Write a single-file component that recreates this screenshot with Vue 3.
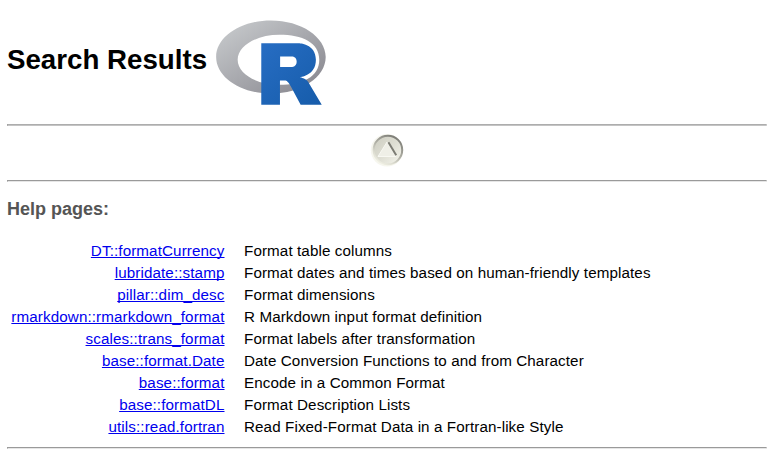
<script setup>
const pages = [
  { name: 'DT::formatCurrency', title: 'Format table columns' },
  { name: 'lubridate::stamp', title: 'Format dates and times based on human-friendly templates' },
  { name: 'pillar::dim_desc', title: 'Format dimensions' },
  { name: 'rmarkdown::rmarkdown_format', title: 'R Markdown input format definition' },
  { name: 'scales::trans_format', title: 'Format labels after transformation' },
  { name: 'base::format.Date', title: 'Date Conversion Functions to and from Character' },
  { name: 'base::format', title: 'Encode in a Common Format' },
  { name: 'base::formatDL', title: 'Format Description Lists' },
  { name: 'utils::read.fortran', title: 'Read Fixed-Format Data in a Fortran-like Style' },
]
</script>

<template>
  <main class="page">
    <header class="head">
      <h1>Search Results</h1>
      <svg class="logo" viewBox="0 0 724 561" preserveAspectRatio="none">
        <defs>
          <linearGradient id="ring" x1="0" y1="0" x2="1" y2="1">
            <stop offset="0" stop-color="#cbced0" />
            <stop offset="1" stop-color="#84838b" />
          </linearGradient>
          <linearGradient id="mark" x1="0" y1="0" x2="1" y2="1">
            <stop offset="0" stop-color="#276dc3" />
            <stop offset="1" stop-color="#165caa" />
          </linearGradient>
        </defs>
        <path fill="url(#ring)" fill-rule="evenodd" d="M361.453,485.937C162.329,485.937 .906,377.828 .906,244.469C.906,111.109 162.329,3 361.453,3C560.578,3 722,111.109 722,244.469C722,377.828 560.578,485.937 361.453,485.937ZM416.641,97.406C265.289,97.406 142.594,171.314 142.594,262.484C142.594,353.654 265.289,427.562 416.641,427.562C567.992,427.562 679.687,377.033 679.687,262.484C679.687,147.971 567.992,97.406 416.641,97.406Z" />
        <path fill="url(#mark)" fill-rule="evenodd" d="M550,377C550,377 571.822,383.585 584.5,390C588.899,392.226 596.51,396.668 602,402.5C607.378,408.212 610,414 610,414L696,559L557,559.062L492,437C492,437 478.69,414.131 470.5,407.5C463.668,401.969 460.755,400 454,400L420.974,400L421,558.974L298,559.026L298,152.938L545,152.938C545,152.938 657.5,154.967 657.5,262C657.5,369.033 550,377 550,377ZM496.5,241.024L422.037,240.976L422,310.026L496.5,310.002C496.5,310.002 531,309.895 531,274.877C531,239.155 496.5,241.024 496.5,241.024Z" />
      </svg>
    </header>
    <div class="rule soft"></div>
    <nav class="up">
      <svg width="34" height="34" viewBox="0 0 34 34">
        <defs>
          <linearGradient id="rim" x1="0.8" y1="0.05" x2="0.25" y2="0.95">
            <stop offset="0" stop-color="#7c7c76" />
            <stop offset="0.5" stop-color="#aeaea4" />
            <stop offset="0.8" stop-color="#dcdcd0" />
            <stop offset="1" stop-color="#eeeee2" />
          </linearGradient>
          <linearGradient id="face" x1="0.1" y1="0.1" x2="0.9" y2="0.9">
            <stop offset="0" stop-color="#cfcfc3" />
            <stop offset="0.5" stop-color="#deded3" />
            <stop offset="1" stop-color="#f1f1e8" />
          </linearGradient>
        </defs>
        <circle cx="17" cy="17.2" r="16.2" fill="#f6f6ee" />
        <circle cx="17.9" cy="17" r="14.3" fill="url(#face)" stroke="url(#rim)" stroke-width="2" />
        <path d="M8 23.5L17 9L26 23.5Z" fill="#efefe7" stroke="#f8f8f2" stroke-width="1" />
        <path d="M18.4 9.3L26.2 22.2" fill="none" stroke="#7c7c74" stroke-width="2" />
      </svg>
    </nav>
    <div class="rule"></div>
    <h3>Help pages:</h3>
    <div class="results">
      <div v-for="p in pages" :key="p.name" class="row">
        <div class="name"><a href="#">{{ p.name }}</a></div>
        <div class="title"><span>{{ p.title }}</span></div>
      </div>
    </div>
    <div class="rule last"></div>
  </main>
</template>

<style>
body {
  background: #fff;
  overflow: hidden;
}
</style>

<style scoped>
.page {
  box-sizing: border-box;
  width: 775px;
  height: 449px;
  padding: 0 8px 0 7px;
  overflow: hidden;
  background: #fff;
  color: #000;
  font-family: Arial, "Liberation Sans", sans-serif;
  font-size: 15.2px;
}
.head {
  display: flex;
  height: 124px;
  align-items: flex-start;
}
h1 {
  width: 209px;
  margin: 44px 0 0;
  font-size: 27.7px;
  line-height: 31px;
  white-space: nowrap;
}
.logo {
  width: 110px;
  height: 85px;
  margin-top: 20px;
}
.rule {
  box-sizing: border-box;
  width: 760px;
  height: 2px;
  border: 1px solid;
  border-color: #9a9a9a #e6e6e6 #e6e6e6 #9a9a9a;
}
.rule.soft {
  border-color: #adadad #dedede #c4c4c4 #9a9a9a;
}
.up {
  display: flex;
  height: 54px;
  padding-top: 7px;
  box-sizing: border-box;
  justify-content: center;
}
h3 {
  height: 58px;
  margin: 0;
  padding-top: 16px;
  box-sizing: border-box;
  color: #555;
  font-size: 18px;
  line-height: 22px;
}
.results {
  display: grid;
  height: 207px;
  grid-auto-rows: 21.95px;
}
.row {
  display: grid;
  grid-template-columns: 217.5px 1fr;
  column-gap: 19.5px;
  line-height: 22px;
  white-space: nowrap;
}
.title {
  letter-spacing: 0.1px;
}
.name {
  text-align: right;
  letter-spacing: 0.11px;
}
a {
  color: #00e;
  text-decoration: underline;
  text-decoration-skip-ink: none;
}
</style>
